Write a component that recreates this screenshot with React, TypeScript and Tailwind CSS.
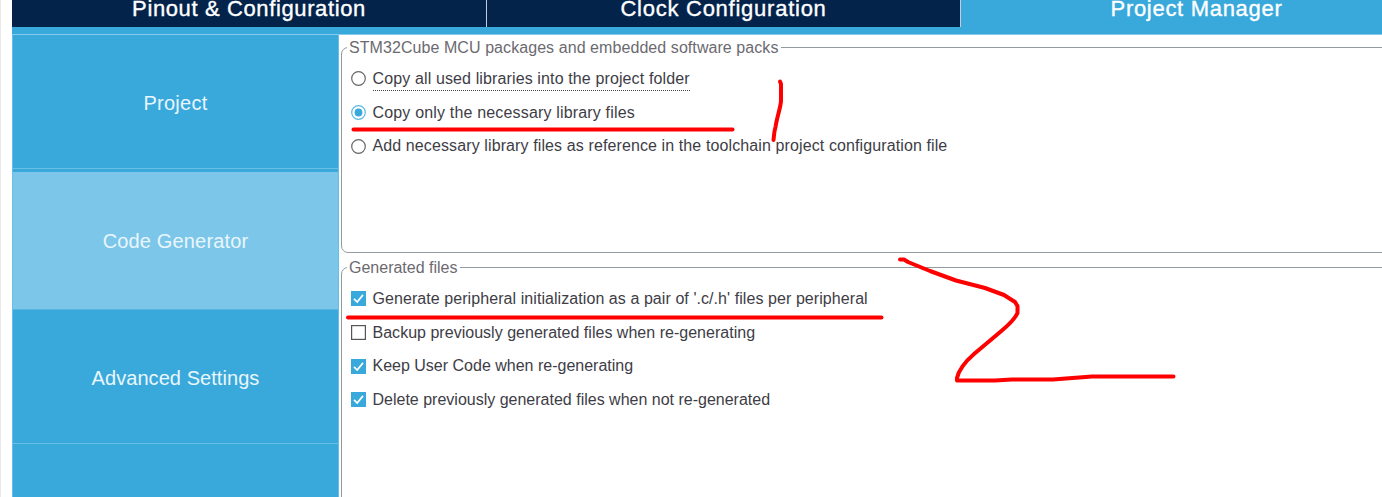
import type { ReactNode } from "react";

function Tab({ children, className }: { children: ReactNode; className: string }) {
  return (
    <div className={`flex h-[27px] shrink-0 items-start justify-center text-[22px] leading-[18px] text-white [-webkit-text-stroke:0.35px_white] ${className}`}>
      <span className="whitespace-nowrap">{children}</span>
    </div>
  );
}

function SideItem({ children, className }: { children?: ReactNode; className: string }) {
  return (
    <div className={`flex shrink-0 items-center justify-center whitespace-nowrap text-[20px] leading-[24px] text-[#e9f6fc] ${className}`}>
      {children}
    </div>
  );
}

function Radio({ checked = false }: { checked?: boolean }) {
  return (
    <svg width="15" height="15" viewBox="0 0 15 15" className="shrink-0">
      <circle cx="7.5" cy="7.5" r="6.8" fill="white" stroke={checked ? "#5bb8e3" : "#666"} strokeWidth="1.2" />
      {checked && <circle cx="7.5" cy="7.5" r="3.9" fill="#39a9dc" />}
    </svg>
  );
}

function Check({ checked = false }: { checked?: boolean }) {
  return (
    <svg width="15" height="15" viewBox="0 0 15 15" className="shrink-0">
      {checked ? (
        <>
          <rect width="15" height="15" fill="#39a9dc" />
          <path d="M3 7.8 L6.2 11 L12 3.9" fill="none" stroke="white" strokeWidth="1.7" />
        </>
      ) : (
        <rect x="0.6" y="0.6" width="13.8" height="13.8" fill="white" stroke="#555" strokeWidth="1.2" />
      )}
    </svg>
  );
}

function Row({ icon, children, className = "" }: { icon: ReactNode; children: ReactNode; className?: string }) {
  return (
    <label className="flex h-[33.7px] items-center gap-[6.5px] whitespace-nowrap text-[16px] leading-[20px] text-[#3e3d46]">
      {icon}
      <span className={className}>{children}</span>
    </label>
  );
}

export default function App() {
  return (
    <div className="relative flex h-[497px] w-[1382px] overflow-hidden border-l border-[#e8e8e8] bg-white pl-[11px] font-['Liberation_Sans',Arial,sans-serif]">
      <div className="flex min-w-0 flex-1 flex-col">
        <header className="flex h-[35px] shrink-0 items-start border-b border-[#87cbea] bg-[#39a9dc]">
          <Tab className="w-[475px] border-r border-[#c5ccd5] bg-[#03234b] tracking-[0.62px]">Pinout &amp; Configuration</Tab>
          <Tab className="w-[474px] border-r border-[#c5ccd5] bg-[#03234b] tracking-[0.75px]">Clock Configuration</Tab>
          <Tab className="w-[471px] bg-[#39a9dc] tracking-[0.7px]">Project Manager</Tab>
        </header>
        <div className="flex min-h-0 flex-1">
          <nav className="flex w-[327px] shrink-0 flex-col overflow-hidden border-x border-[#69bee5] bg-[#39a9dc]">
            <SideItem className="h-[134px] border-b border-[#69bee5] pt-[3px] tracking-[0.25px]">Project</SideItem>
            <SideItem className="mt-[3px] h-[138px] border-b border-[#5ab6e1] bg-[#7cc6ea] tracking-[0.15px]">Code Generator</SideItem>
            <SideItem className="h-[134px] border-b border-[#69bee5] pt-[3px] tracking-[0.06px]">Advanced Settings</SideItem>
          </nav>
          <main className="min-w-0 flex-1 overflow-hidden pl-[2px]">
            <fieldset className="mt-[2px] h-[216px] w-[1060px] rounded-[7px] border border-[#92999f] pl-[9px]">
              <legend className="-ml-[4px] h-[20px] whitespace-nowrap px-[2px] text-[16px] leading-[22px] tracking-[0.07px] text-[#6c6a70]">STM32Cube MCU packages and embedded software packs</legend>
              <div className="pt-[5px]">
                <Row icon={<Radio />} className="border-b border-dotted border-[#444] pt-[3px] pb-px tracking-[0.125px]">Copy all used libraries into the project folder</Row>
                <Row icon={<Radio checked />} className="tracking-[0.17px]">Copy only the necessary library files</Row>
                <Row icon={<Radio />} className="tracking-[0.11px]">Add necessary library files as reference in the toolchain project configuration file</Row>
              </div>
            </fieldset>
            <fieldset className="mt-[4px] h-[300px] w-[1060px] rounded-[7px] border border-[#92999f] pl-[9px]">
              <legend className="-ml-[4px] h-[20px] whitespace-nowrap px-[2px] text-[16px] leading-[22px] text-[#6c6a70]">Generated files</legend>
              <div className="pt-[5px]">
                <Row icon={<Check checked />} className="tracking-[0.07px]">Generate peripheral initialization as a pair of '.c/.h' files per peripheral</Row>
                <Row icon={<Check />} className="tracking-[0.02px]">Backup previously generated files when re-generating</Row>
                <Row icon={<Check checked />}>Keep User Code when re-generating</Row>
                <Row icon={<Check checked />}>Delete previously generated files when not re-generated</Row>
              </div>
            </fieldset>
          </main>
        </div>
      </div>
      <svg className="pointer-events-none absolute top-0 -left-px" width="1382" height="497" viewBox="0 0 1382 497" fill="none" stroke="#fe0000" strokeWidth="4" strokeLinecap="round" strokeLinejoin="round">
        <path d="M353.500 129.500H732.500" />
        <path d="M348 317.500H881.500" />
        <path d="M780 81.500L781 84V101C780.500 108 777 117 775.500 127C774 132 774 136 773.500 140" />
        <path d="M900 259.500H904L908 262L930 271L956 280.500L985 288L1004 295L1015 302L1017.500 306V313C1014 321 1005 328 999 333L974 354C966 361 959 369 957 378V380.500H995L1012 379.500H1053L1092 376.500H1173.500" />
      </svg>
    </div>
  );
}
